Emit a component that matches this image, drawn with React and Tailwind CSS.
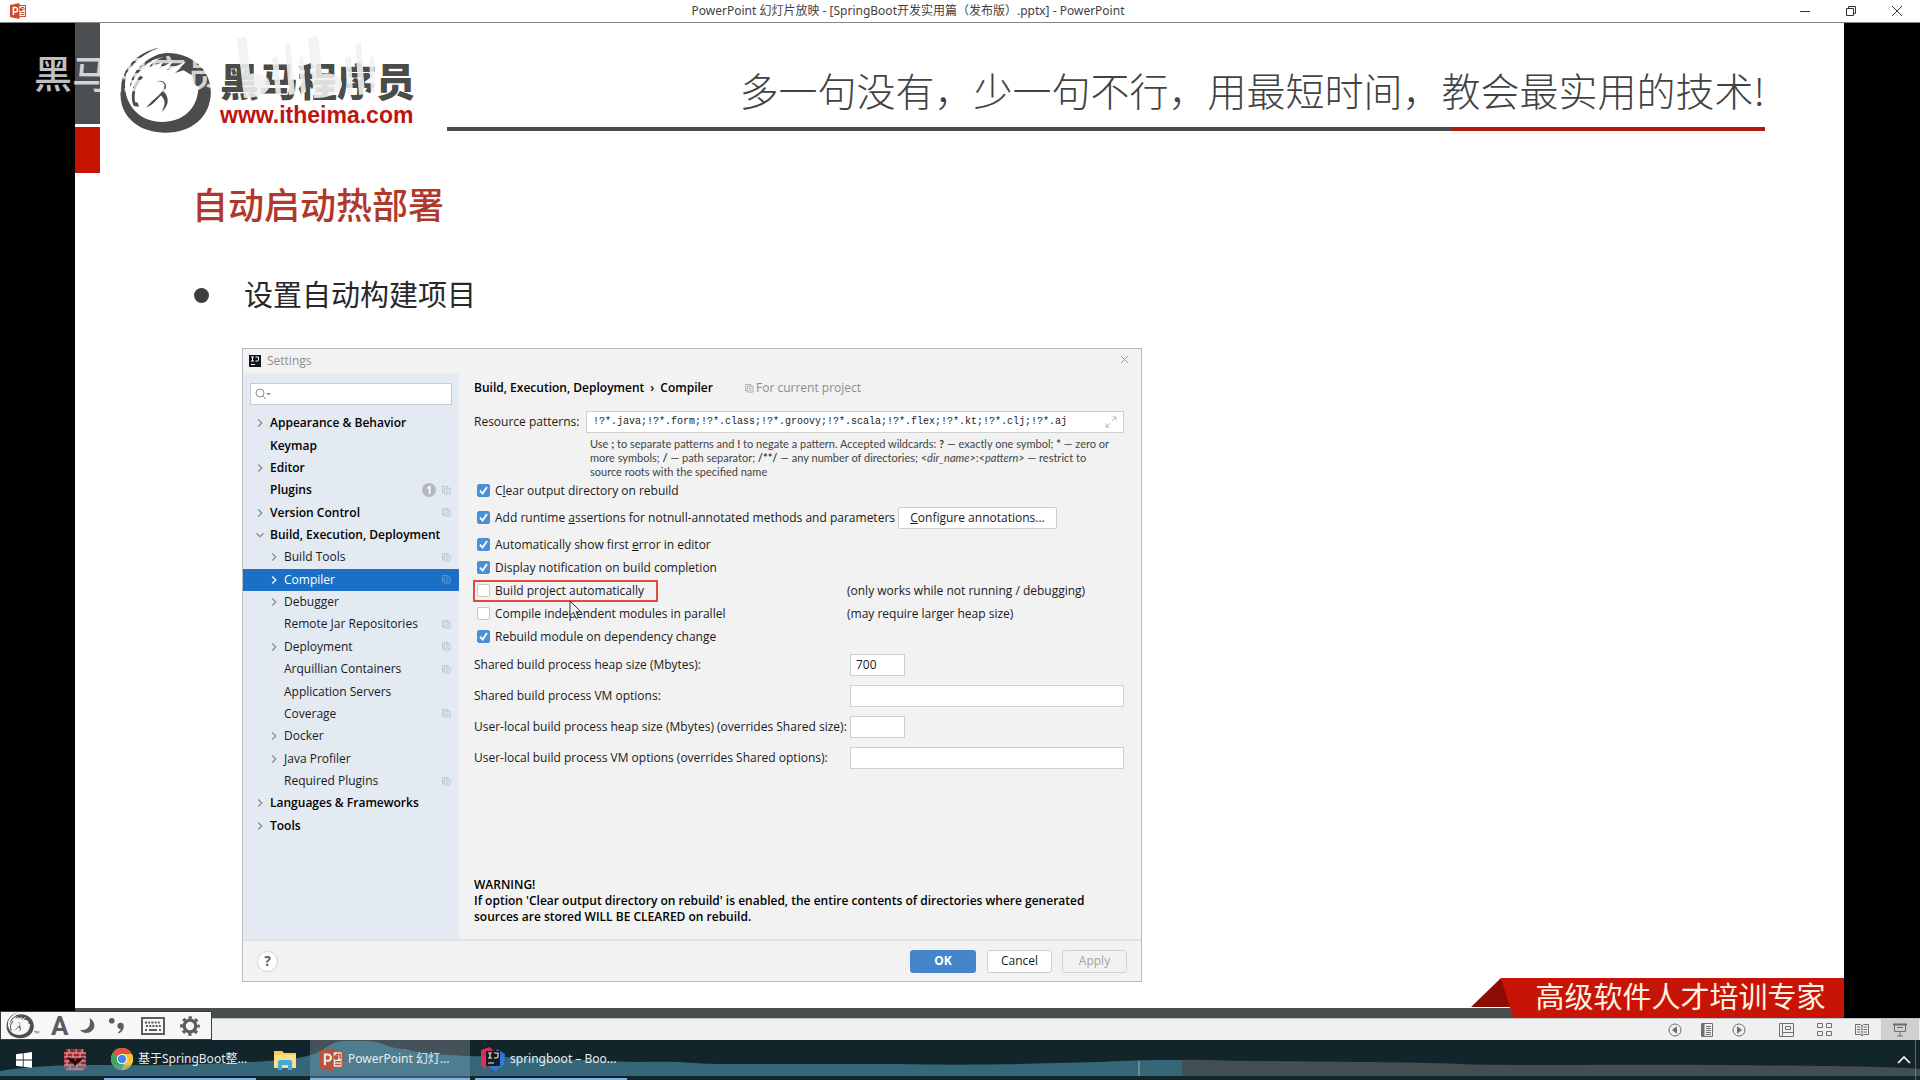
import React from "react";

const UI = "font-['Noto_Sans','Noto_Sans_CJK_SC',sans-serif]";
const DIALOG = "font-['Open_Sans','Noto_Sans_CJK_SC',sans-serif]";

function HorseLogo({ className }) {
  return (
    <svg viewBox="0 0 280 262" className={className} aria-hidden="true">
      <path d="M148 18 C220 18 278 68 278 136 C278 208 222 258 142 258 C66 258 6 214 6 142 C6 110 14 86 26 66 C22 88 18 104 20 126 C26 186 72 226 130 226 C196 226 238 184 240 126 L246 124 L226 110 L222 84 L250 82 C232 50 196 30 148 30 C122 30 100 40 88 50 C92 36 116 18 148 18Z" fill="#4b4c4c" />
      <path d="M122 2 C62 14 16 56 8 116 C22 66 62 24 122 2Z" fill="#4b4c4c" />
      <path d="M128 20 C84 32 40 70 34 122 C54 76 86 44 128 20Z" fill="#4b4c4c" />
      <path d="M92 60 C110 34 140 26 166 26 C206 32 236 52 250 84 L222 86 L196 70 L170 78 L204 44 L146 70 L164 42 L122 66 L134 46Z" fill="#4b4c4c" />
      <path d="M66 84 C40 116 34 150 46 178 L62 180 L58 168 L50 166 C46 146 50 112 74 92Z" fill="#4b4c4c" />
      <path d="M112 104 C138 100 144 116 134 130 C120 150 100 160 84 182 C106 174 114 158 128 146 C142 160 142 172 130 196 C156 172 150 150 138 136 C150 116 140 94 112 104Z" fill="#4b4c4c" />
    </svg>
  );
}

function BiliMark({ className }) {
  return (
    <svg viewBox="0 0 144 64" className={className} aria-hidden="true">
      <g fill="#f1f1f1" fillOpacity="0.88">
        <path d="M5 3 L14 0 L18 38 C30 36 38 42 38 48 C38 56 28 62 12 62Z" />
        <path d="M40 22 L46 20 L49 58 L44 60Z M53 8 L58 7 L63 58 L57 59Z M67 22 L71 20 L74 56 L69 58Z" />
        <path d="M76 2 L86 0 L90 38 C104 36 110 42 110 48 C110 56 100 62 82 62Z" />
        <path d="M113 22 L119 20 L121 58 L116 60Z M123 8 L129 6 L133 58 L127 59Z M137 22 L142 20 L143 56 L139 58Z" />
      </g>
    </svg>
  );
}

function PptIcon({ className }) {
  return (
    <svg viewBox="0 0 16 16" className={className} aria-hidden="true">
      <rect x="8" y="2.5" width="7.5" height="11" fill="#fff" stroke="#c9512f" strokeWidth="1" />
      <path d="M11 4.5h3v3M10.5 9.5h4M10.5 11.5h4" stroke="#c9512f" fill="none" />
      <circle cx="11.2" cy="6.6" r="1.7" fill="#c9512f" />
      <path d="M0 2 L9.5 0 V16 L0 14Z" fill="#cf4a27" />
      <path d="M3.4 12V4.5H5.4a2.1 2.1 0 0 1 0 4.4H3.6" fill="none" stroke="#fff" strokeWidth="1.5" />
    </svg>
  );
}

function Chevron({ open, light }) {
  return (
    <svg viewBox="0 0 10 10" className="size-2.5" aria-hidden="true">
      <path d={open ? "M1.5 3.2 5 6.8 8.5 3.2" : "M3.2 1.5 6.8 5 3.2 8.5"} fill="none" stroke={light ? "#fff" : "#8b8f94"} strokeWidth="1.3" />
    </svg>
  );
}

function CopyGlyph({ className }) {
  return (
    <svg viewBox="0 0 10 10" className={className} fill="none" stroke="currentColor" aria-hidden="true">
      <path d="M2.5 7.5h-2v-7h6v2M2.5 2.5h6.5v6.5h-6.5zM4.3 4.8h3M4.3 6.8h3" />
    </svg>
  );
}

const TREE = [
  { t: "Appearance & Behavior", top: true, arrow: true },
  { t: "Keymap", top: true },
  { t: "Editor", top: true, arrow: true },
  { t: "Plugins", top: true, badge: "1", copy: true },
  { t: "Version Control", top: true, arrow: true, copy: true },
  { t: "Build, Execution, Deployment", top: true, arrow: true, open: true },
  { t: "Build Tools", arrow: true, copy: true },
  { t: "Compiler", arrow: true, copy: true, active: true },
  { t: "Debugger", arrow: true },
  { t: "Remote Jar Repositories", copy: true },
  { t: "Deployment", arrow: true, copy: true },
  { t: "Arquillian Containers", copy: true },
  { t: "Application Servers" },
  { t: "Coverage", copy: true },
  { t: "Docker", arrow: true },
  { t: "Java Profiler", arrow: true },
  { t: "Required Plugins", copy: true },
  { t: "Languages & Frameworks", top: true, arrow: true },
  { t: "Tools", top: true, arrow: true },
];

function TreeRow({ item }) {
  return (
    <li className={item.active ? "bg-[#1b6fc5] text-white" : "text-[#1a1a1a]"}>
      <button type="button" className={`flex h-full w-full items-center pr-2 text-left ${item.top ? "pl-3 font-semibold text-black" : "pl-[26px]"}`}>
        <span className="flex w-[15px] items-center">{item.arrow && <Chevron open={item.open} light={item.active} />}</span>
        <span className="flex-1 whitespace-nowrap">{item.t}</span>
        {item.badge && (
          <span className="mr-1.5 flex size-3.5 items-center justify-center rounded-full bg-[#b4b9be] text-[10px] font-bold text-white">{item.badge}</span>
        )}
        {item.copy && <CopyGlyph className={`size-[9px] ${item.active ? "text-[#5c97d3]" : "text-[#bcc3ca]"}`} />}
      </button>
    </li>
  );
}

function Check({ checked, className = "", children }) {
  return (
    <label className={`flex shrink-0 items-center gap-[5px] whitespace-nowrap ${className}`}>
      <span className="grid size-[13px] place-items-center">
        <input type="checkbox" defaultChecked={checked} className="peer col-start-1 row-start-1 size-[13px] appearance-none rounded-[2px] border border-[#c8c8c8] bg-white checked:border-[#4a90d6] checked:bg-[#4a90d6]" />
        <svg viewBox="0 0 13 13" className="pointer-events-none invisible col-start-1 row-start-1 size-[13px] peer-checked:visible" aria-hidden="true">
          <path d="M3 6.6 5.6 9.6 10 3" fill="none" stroke="#fff" strokeWidth="1.8" />
        </svg>
      </span>
      <span>{children}</span>
    </label>
  );
}

function Field({ id, label, wide, value = "" }) {
  return (
    <div className="flex h-[31px] items-center">
      <label htmlFor={id} className="w-[376px] shrink-0 whitespace-nowrap">{label}</label>
      <input id={id} defaultValue={value} className={`h-[22px] min-w-0 border border-[#d0d0d0] bg-white px-[5px] ${wide ? "flex-1" : "w-[55px]"}`} />
    </div>
  );
}

function SettingsDialog() {
  return (
    <section className={`relative flex w-[900px] flex-col border border-[#b9bbbd] bg-[#f2f2f2] text-[12px] leading-4 text-[#1a1a1a] ${DIALOG}`}>
      <header className="flex h-6 items-center pr-3 pl-1.5 text-[#8f8f8f]">
        <svg viewBox="0 0 12 12" className="mr-1.5 size-3" aria-hidden="true">
          <rect width="12" height="12" fill="#10161f" />
          <path d="M2 2h3M3.5 2v4M2 6h3M6.500 2h3v3q0 1-1.500 1H6.500M2 9.500h4" stroke="#fff" fill="none" />
        </svg>
        <h2 className="flex-1">Settings</h2>
        <button type="button" aria-label="Close settings">
          <svg viewBox="0 0 9 9" className="mb-1 size-[9px]" stroke="#9a9a9a"><path d="M1 1 8 8M8 1 1 8" /></svg>
        </button>
      </header>
      <div className="flex h-[566px]">
        <nav className="w-[216px] shrink-0 bg-[#e3eaf2] pt-[10px]" aria-label="Settings categories">
          <div className="mr-[7px] mb-[7px] ml-[7px] flex h-[22px] items-center border border-[#c5ccd3] bg-white pl-1">
            <svg viewBox="0 0 16 12" className="h-3 w-4" fill="none" stroke="#8d9297" aria-hidden="true">
              <circle cx="5" cy="5" r="4" /><path d="M8 8l3 3" /><path d="M11 5h5l-2.500 2.500z" fill="#8d9297" stroke="none" />
            </svg>
            <input type="search" aria-label="Search settings" className="h-full min-w-0 flex-1 outline-none" />
          </div>
          <ul className="grid h-[425px] auto-rows-fr">
            {TREE.map((item) => <TreeRow key={item.t} item={item} />)}
          </ul>
        </nav>
        <div className="flex min-w-0 flex-1 flex-col pt-px pr-[17px] pb-3.5 pl-[15px]">
          <div className="flex h-7 items-center font-semibold text-black">
            <span>Build, Execution, Deployment</span>
            <span className="px-1.5">›</span>
            <span>Compiler</span>
            <CopyGlyph className="mr-0.5 ml-8 size-[9px] text-[#a8a8a8]" />
            <span className="font-normal text-[#8c8c8c]">For current project</span>
          </div>
          <div className="mt-[9px] flex items-center">
            <label htmlFor="patterns" className="w-28 shrink-0">Resource patterns:</label>
            <div className="flex h-[22px] min-w-0 flex-1 items-center border border-[#d0d0d0] bg-white pr-1.5 pl-1.5">
              <input id="patterns" defaultValue="!?*.java;!?*.form;!?*.class;!?*.groovy;!?*.scala;!?*.flex;!?*.kt;!?*.clj;!?*.aj" className="min-w-0 flex-1 font-['Liberation_Mono',monospace] text-[10px]" />
              <svg viewBox="0 0 12 12" className="size-3" fill="none" stroke="#b5b5b5" aria-hidden="true"><path d="M7 5l4-4M7.500 1H11v3.500M5 7l-4 4M1 7.500V11h3.500" /></svg>
            </div>
          </div>
          <p className="mt-1 ml-[116px] font-['Lato',sans-serif] text-[11px] leading-[14px] whitespace-nowrap text-[#444]">
            Use <b>;</b> to separate patterns and <b>!</b> to negate a pattern. Accepted wildcards: <b>?</b> — exactly one symbol; <b>*</b> — zero or
            <br />more symbols; <b>/</b> — path separator; <b>/**/</b> — any number of directories; <i>&lt;dir_name&gt;</i>:<i>&lt;pattern&gt;</i> — restrict to
            <br />source roots with the specified name
          </p>
          <div className="flex flex-col pl-[3px]">
            <Check checked className="h-[23px]">C<u>l</u>ear output directory on rebuild</Check>
            <div className="flex h-[31px] items-center">
              <Check checked className="w-[421px]">Add runtime <u>a</u>ssertions for notnull-annotated methods and parameters</Check>
              <button type="button" className="h-[22px] w-[159px] rounded-[2px] border border-[#cfcfcf] bg-white"><u>C</u>onfigure annotations...</button>
            </div>
            <Check checked className="h-[23px]">Automatically show first <u>e</u>rror in editor</Check>
            <Check checked className="h-[23px]">Display notification on build completion</Check>
            <div className="flex h-[23px] items-center">
              <div className="w-[370px] shrink-0">
                <Check className="-ml-1 h-[22px] w-[185px] border-2 border-[#e5483f] pl-0.5">Build project automatically</Check>
              </div>
              <span>(only works while not running / debugging)</span>
            </div>
            <div className="flex h-[23px] items-center">
              <Check className="w-[370px]">Compile independent modules in parallel</Check>
              <span>(may require larger heap size)</span>
            </div>
            <Check checked className="h-[23px]">Rebuild module on dependency change</Check>
          </div>
          <div className="mt-px">
            <Field id="heap" label="Shared build process heap size (Mbytes):" value="700" />
            <Field id="vm" label="Shared build process VM options:" wide />
            <Field id="uheap" label="User-local build process heap size (Mbytes) (overrides Shared size):" />
            <Field id="uvm" label="User-local build process VM options (overrides Shared options):" wide />
          </div>
          <p className="mt-auto font-semibold whitespace-nowrap text-black">
            WARNING!<br />If option 'Clear output directory on rebuild' is enabled, the entire contents of directories where generated
            <br />sources are stored WILL BE CLEARED on rebuild.
          </p>
        </div>
      </div>
      <footer className="flex h-[42px] items-center border-t-2 border-[#e0e3e6] pr-3.5 pl-3.5">
        <button type="button" className="mr-auto size-[21px] rounded-full border border-[#d4d4d4] bg-white text-[14px] font-bold text-[#5c5c5c]">?</button>
        <button type="button" className="mr-[11px] h-[23px] w-[66px] rounded-[3px] bg-[#4585cb] font-bold text-white">OK</button>
        <button type="button" className="mr-2.5 h-[23px] w-[65px] rounded-[3px] border border-[#cfcfcf] bg-white">Cancel</button>
        <button type="button" disabled className="h-[23px] w-[65px] rounded-[3px] border border-[#d2d2d2] text-[#a3a3a3]">Apply</button>
      </footer>
      <svg viewBox="0 0 14 20" className="absolute top-[251px] left-[326px] h-5 w-3.5" aria-hidden="true">
        <path d="M1 1V15.500L4.500 12.500 7 18.500 9.500 17.300 7 11.800H12Z" fill="#f6f6f6" stroke="#333" />
      </svg>
    </section>
  );
}

function ImeBar() {
  return (
    <div className="absolute bottom-10 left-0 flex h-[29px] w-[212px] items-center border border-[#3c3c3c] bg-[#f7f7f8] pl-[5px] text-[#5c5c5c]">
      <HorseLogo className="h-[27px] w-7" />
      <span className="w-[13px] self-end text-[7px]">™</span>
      <span className="w-[32px] pl-1 font-['Roboto',sans-serif] text-[26px] leading-7 font-bold">A</span>
      <svg viewBox="0 0 18 18" className="mr-[12px] size-[17px]" fill="currentColor" aria-hidden="true"><path d="M11 1C17 4 18 11 13.500 14.800 10 18 4 17.500 1 13.500 5 14.500 9 13 10.800 9.500 12 6.500 12 4 11 1Z" /></svg>
      <svg viewBox="0 0 18 18" className="mr-[16px] size-[17px]" fill="currentColor" aria-hidden="true"><circle cx="4" cy="4" r="3" /><path d="M10 9.500a3.300 3.300 0 1 1 6.600 0C17 13 14.500 16 11 17.500L10.500 16.500C12.500 15 13.500 13.500 13.500 12.500 11.500 13 10 11.500 10 9.500Z" /></svg>
      <svg viewBox="0 0 24 18" className="mr-[15px] h-[18px] w-6" fill="none" stroke="currentColor" aria-hidden="true">
        <rect x="1" y="1" width="22" height="16" strokeWidth="2" />
        <path d="M4 5.500h16M5 9h15" strokeWidth="2" strokeDasharray="2 1.200" /><path d="M4 13h2M8 13h8M18 13h2" strokeWidth="2" />
      </svg>
      <svg viewBox="0 0 20 20" className="size-5" fill="none" stroke="currentColor" aria-hidden="true">
        <circle cx="10" cy="10" r="5.800" strokeWidth="3.200" /><circle cx="10" cy="10" r="8.300" strokeWidth="3" strokeDasharray="3.200 3.320" strokeDashoffset="1.600" />
      </svg>
    </div>
  );
}

function StatusBar() {
  const btn = "flex h-full items-center justify-center";
  return (
    <div className="flex h-[22px] items-center justify-end border-t border-[#bfc2c4] bg-[#eff0f2] text-[#6f6f6f]">
      <button type="button" aria-label="Previous slide" className={`${btn} w-8`}>
        <svg viewBox="0 0 14 14" className="size-3.5" fill="none" stroke="currentColor"><circle cx="7" cy="7" r="6" /><path d="M8.500 4v6L4.500 7z" fill="currentColor" /></svg>
      </button>
      <button type="button" aria-label="Slide menu" className={`${btn} w-8`}>
        <svg viewBox="0 0 12 14" className="h-3.5 w-3" fill="none" stroke="currentColor"><path d="M.5.5h11v13H.5zM5 3.500h5M5 5.500h5M5 7.500h5M5 9.500h5M5 11.500h5" /><path d="M2 1v12" strokeWidth="3" /></svg>
      </button>
      <button type="button" aria-label="Next slide" className={`${btn} w-8`}>
        <svg viewBox="0 0 14 14" className="size-3.5" fill="none" stroke="currentColor"><circle cx="7" cy="7" r="6" /><path d="M5.500 4v6l4-3z" fill="currentColor" /></svg>
      </button>
      <button type="button" aria-label="Normal view" className={`${btn} ml-3 w-[38px]`}>
        <svg viewBox="0 0 15 14" className="h-3.5 w-[15px]" fill="none" stroke="currentColor"><path d="M.5.5h14v13H.5zM3.500.5v13M3.500 9.500h11M6.500 3.500h5v3h-5z" /></svg>
      </button>
      <button type="button" aria-label="Slide sorter" className={`${btn} w-[38px]`}>
        <svg viewBox="0 0 15 14" className="h-3.5 w-[15px]" fill="none" stroke="currentColor"><path d="M.5.5h5v4h-5zM9.500.5h5v4h-5zM.5 8.500h5v4h-5zM9.500 8.500h5v4h-5z" /></svg>
      </button>
      <button type="button" aria-label="Reading view" className={`${btn} w-[38px]`}>
        <svg viewBox="0 0 14 14" className="size-3.5" fill="none" stroke="currentColor"><path d="M.5 1.500h5L7 3l1.500-1.500h5v10h-5L7 13l-1.500-1.500h-5zM7 3v10M2 4h3.500M2 6.500h3.500M2 9h3.500M8.500 4H12M8.500 6.500H12M8.500 9H12" /></svg>
      </button>
      <button type="button" aria-label="Slide show" className={`${btn} mr-px w-[38px] bg-[#cfd0d1]`}>
        <svg viewBox="0 0 14 14" className="size-3.5" fill="none" stroke="currentColor"><path d="M0 1.500h14" strokeWidth="2" /><path d="M1.500 2v6.500h11V2M4 4.500h6M7 8.500V13M4 13h6" /></svg>
      </button>
    </div>
  );
}

function TaskButton({ className, children, icon }) {
  return (
    <button type="button" className={`flex h-full items-center gap-[5px] border-b-2 border-[#7fb2dc] text-left text-[12px] whitespace-nowrap text-[#e8eef0] ${className}`}>
      {icon}
      <span className="relative z-10">{children}</span>
    </button>
  );
}

function Taskbar() {
  return (
    <footer className={`relative flex h-10 bg-[#12252b] ${UI}`}>
      <button type="button" aria-label="Start" className="w-12 pl-4">
        <svg viewBox="0 0 16 16" className="size-4" fill="#fff"><path d="M0 2.300 6.800 1.300V7.600H0zM7.600 1.200 16 0v7.600H7.600zM0 8.400h6.800v6.300L0 13.700zM7.600 8.400H16V16l-8.400-1.200z" /></svg>
      </button>
      <button type="button" aria-label="Firewall" className="w-14 pl-[15px]">
        <svg viewBox="0 0 24 24" className="size-6">
          <path d="M3 1h18v3h2v17h-3v2H3v-3H1V4h2z" fill="#a3242a" />
          <path d="M1 5h22M1 9h22M1 13h22M1 17h22M3 21h18M6 1v4M13 1v4M19 1v4M4 5v4M10 5v4M17 5v4M6 9v4M19 9v4M4 13v4M11 13v4M17 13v4M7 17v4M14 17v4" stroke="#e3c9c6" strokeWidth="0.9" />
          <path d="M4 9l7 2 1 2 2-2 7-2-4 5-3 1-2 4-2-4-3-1z" fill="#1a0d0d" />
        </svg>
      </button>
      <TaskButton className="w-[152px] pl-[7px]" icon={
        <svg viewBox="0 0 22 22" className="size-[22px]" aria-hidden="true">
          <circle cx="11" cy="11" r="11" fill="#f4c52e" />
          <path d="M11 11 20.600 5.500A11 11 0 0 0 1.500 5.500Z" fill="#e0503e" />
          <path d="M11 11 1.500 5.500A11 11 0 0 0 10 22L15 13Z" fill="#3fa45b" />
          <path d="M11 6h9.800A11 11 0 0 1 10 22L15.300 13.500Z" fill="#f4c52e" />
          <circle cx="11" cy="11" r="5.200" fill="#fff" /><circle cx="11" cy="11" r="4.200" fill="#4384ee" />
        </svg>
      }>基于SpringBoot整...</TaskButton>
      <button type="button" aria-label="File explorer" className="w-[54px] pl-[18px]">
        <svg viewBox="0 0 22 20" className="relative z-10 h-5 w-[22px]"><path d="M0 1h8l2 2h12v15H0z" fill="#f5cf5b" /><path d="M0 5h22v13H0z" fill="#fbe08a" /><path d="M4 20v-8q0-2 2-2h10q2 0 2 2v8h-4v-5H8v5z" fill="#44a9dc" /></svg>
      </button>
      <TaskButton className="w-40 bg-[#46525a] pl-2.5" icon={<PptIcon className="relative z-10 size-[23px] opacity-85" />}>PowerPoint 幻灯...</TaskButton>
      <TaskButton className="ml-[5px] w-[152px] pl-1.5" icon={
        <svg viewBox="0 0 24 24" className="relative z-10 size-6 opacity-90" aria-hidden="true">
          <path d="M0 3 9 0 14 6 4 22 0 18Z" fill="#e8315b" /><path d="M16 2 24 7 23 18 14 24 8 20Z" fill="#2e7de8" />
          <rect x="5" y="4" width="14" height="15" fill="#161616" />
          <path d="M7 6h4M9 6v5M7 11h4M13 6h4v3.500q0 1.500-2 1.500h-2M7 16h6" stroke="#fff" strokeWidth="1.200" fill="none" />
        </svg>
      }>springboot – Boo...</TaskButton>
      <button type="button" aria-label="Show hidden icons" className="mr-1 ml-auto w-[25px] border-r border-[#5d6c70]">
        <svg viewBox="0 0 14 8" className="ml-1.5 h-2 w-3.5" fill="none" stroke="#fff" strokeWidth="1.600"><path d="M1 7l6-6 6 6" /></svg>
      </button>
      <svg viewBox="0 0 1920 40" preserveAspectRatio="none" className="pointer-events-none absolute inset-0 h-full w-full" aria-hidden="true">
        <path d="M0 31C30 26 60 25 100 25C160 26 200 24 250 22C290 20 312 18 325 8C335 1 340 1 350 1H368C385 2 385 8 405 9C425 15 440 14 465 16C520 17 600 21 640 22C690 21 690 24 720 24H900C1000 26 1040 23 1100 22C1140 20 1150 20 1182 20V36H0Z" fill="#57a5bf" fillOpacity="0.52" />
        <path d="M1182 20C1200 19 1230 21 1260 21C1340 22 1400 22 1460 24C1500 26 1640 24 1720 25C1800 26 1880 26 1920 29V36H1182Z" fill="#8b8b88" fillOpacity="0.4" />
        <path d="M1139 21V36" stroke="#8fa5aa" strokeOpacity="0.6" strokeWidth="2" />
      </svg>
    </footer>
  );
}

export default function App() {
  return (
    <div className="relative flex min-h-screen flex-col bg-black">
      <header className={`flex h-[23px] items-center border-b border-[#858786] bg-white text-[#3f4142] ${UI}`}>
        <PptIcon className="ml-2.5 size-4" />
        <h1 className="flex-1 pl-2 text-center text-[12px] leading-5">PowerPoint 幻灯片放映 - [SpringBoot开发实用篇（发布版）.pptx] - PowerPoint</h1>
        <button type="button" aria-label="Minimize" className="flex w-[46px] justify-center"><svg viewBox="0 0 10 10" className="size-2.5" stroke="#333"><path d="M0 5.500h10" /></svg></button>
        <button type="button" aria-label="Restore" className="flex w-[46px] justify-center"><svg viewBox="0 0 10 10" className="size-2.5" stroke="#333" fill="none"><path d="M.5 2.500h7v7h-7zM2.500 2.500v-2h7v7h-2" /></svg></button>
        <button type="button" aria-label="Close" className="flex w-[46px] justify-center"><svg viewBox="0 0 10 10" className="size-2.5" stroke="#333"><path d="M0 0l10 10M10 0L0 10" /></svg></button>
      </header>

      <main className="mr-[76px] ml-[75px] flex flex-1 flex-col bg-white font-['Noto_Sans_CJK_SC',sans-serif]">
        <div className="flex h-[150px]">
          <div className="flex w-[25px] flex-col gap-[3px]">
            <div className="h-[101px] bg-[#4c4f51]" />
            <div className="h-[46px] bg-[#c41400]" />
          </div>
          <div className="ml-[18px] flex items-start gap-2 pt-6">
            <HorseLogo className="h-[87px] w-[94px]" />
            <div className="flex flex-col pt-3">
              <span className="text-[39px] leading-10 font-black text-[#4a4b4b]">黑马程序员</span>
              <span className="pt-0.5 font-['Liberation_Sans',sans-serif] text-[23px] leading-7 font-bold text-[#bd1510]">www.itheima.com</span>
            </div>
          </div>
          <div className="mr-[79px] ml-8 flex flex-1 flex-col pt-[38px]">
            <p className="text-right text-[39px] leading-[56px] font-light whitespace-nowrap text-[#404243]">多一句没有，少一句不行，用最短时间，教会最实用的技术!</p>
            <div className="mt-2.5 flex h-1">
              <div className="flex-1 bg-[#4a4d4d]" />
              <div className="w-[314px] bg-[#b01c10]" />
            </div>
          </div>
        </div>
        <div className="flex flex-1 flex-col items-start pl-[119px]">
          <h2 className="mt-1 -ml-0.5 text-[36px] leading-[52px] font-medium text-[#b0392c]">自动启动热部署</h2>
          <p className="mt-11 flex items-center gap-[35px] text-[29px] leading-10 text-[#26282a]">
            <span className="mt-1 size-[15px] rounded-full bg-[#3c3e40]" />
            设置自动构建项目
          </p>
          <div className="mt-[35px] ml-12">
            <SettingsDialog />
          </div>
        </div>
        <div className="mt-[26px] flex h-2.5 items-end">
          <div className="h-2.5 flex-1 bg-[#4a4d4d]" />
          <div className="relative -ml-3 flex h-10 w-[343px] shrink-0 items-center">
            <svg viewBox="0 0 373 40" className="absolute right-0 h-10 w-[373px]" preserveAspectRatio="none" aria-hidden="true">
              <path d="M30 0 0 29H44Z" fill="#8a0c05" />
              <path d="M30 0H373V40H42Z" fill="#c81407" />
            </svg>
            <span className="relative flex-1 pb-1.5 pl-4 text-center text-[29px] leading-[34px] text-[#fff3e0]">高级软件人才培训专家</span>
          </div>
        </div>
      </main>

      <StatusBar />
      <Taskbar />
      <ImeBar />

      <div className="pointer-events-none absolute top-9 left-[34px] flex items-start">
        <span className="pt-2 font-['Noto_Sans_CJK_SC',sans-serif] text-[38px] leading-[56px] font-medium text-white/75">黑马程序员</span>
        <BiliMark className="ml-2 h-16 w-36" />
      </div>
    </div>
  );
}
